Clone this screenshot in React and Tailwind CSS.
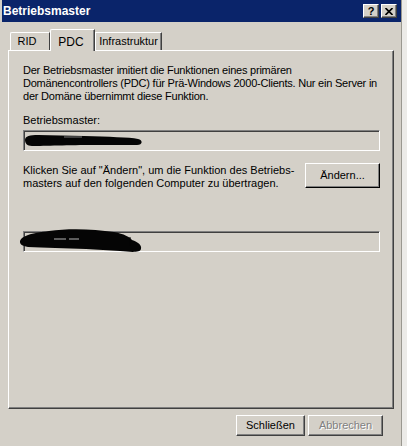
import React from "react";

const font = { fontFamily: '"Liberation Sans", Arial, sans-serif' };

function TitleBtn({ children }) {
  return (
    <div className="w-[16px] h-[14px] bg-[#d4d0c8] border-t border-l border-t-white border-l-white border-b border-r border-b-[#404040] border-r-[#404040] shadow-[inset_-1px_-1px_0_#808080] flex items-center justify-center">
      {children}
    </div>
  );
}

function Raised({ className = "", children }) {
  return (
    <div
      className={
        "bg-[#d4d0c8] border-t border-l border-t-white border-l-white border-b border-r border-b-[#404040] border-r-[#404040] shadow-[inset_-1px_-1px_0_#808080] flex items-center justify-center " +
        className
      }
    >
      {children}
    </div>
  );
}

function Sunken({ children }) {
  return (
    <div className="relative w-[357px] h-[21px] border-t border-l border-t-[#808080] border-l-[#808080] border-b border-r border-b-white border-r-white shadow-[inset_1px_1px_0_#404040]">
      {children}
    </div>
  );
}

export default function App() {
  return (
    <div className="w-[407px] h-[446px] bg-[#d4d0c8] flex text-black overflow-hidden" style={font}>
      <div className="w-[402px] h-full flex flex-col pl-[2px] border-r border-r-[#9a9890]">
        {/* Title bar */}
        <div className="h-[22px] bg-[#0a246a] flex items-center justify-between pl-[1px] pr-[4px]">
          <span className="text-white font-bold text-[12px] leading-none">Betriebsmaster</span>
          <div className="flex gap-[2px]">
            <TitleBtn>
              <span className="text-[11px] font-bold leading-none text-black">?</span>
            </TitleBtn>
            <TitleBtn>
              <svg width="8" height="7" viewBox="0 0 8 7">
                <path d="M0.5 0 L7.5 7 M7.5 0 L0.5 7" stroke="#000" strokeWidth="1.6" />
              </svg>
            </TitleBtn>
          </div>
        </div>

        {/* Tabs */}
        <div className="mt-[7px] h-[21px] flex items-end pl-[8px] text-[11px]">
          <div className="w-[40px] h-[18px] border-t border-l border-t-white border-l-white border-r border-r-[#404040] rounded-tl-[2px] flex items-center justify-center pr-[6px]">
            RID
          </div>
          <div className="relative z-10 w-[45px] h-[22px] -mb-[1px] bg-[#d4d0c8] border-t border-l border-t-white border-l-white border-r border-r-[#404040] shadow-[inset_-1px_0_0_#808080] rounded-tl-[2px] flex items-start justify-center pt-[3px] text-[12px] pr-[3px]">
            PDC
          </div>
          <div className="w-[67px] h-[18px] border-t border-l border-t-white border-l-[#ffffff] border-r border-r-[#404040] shadow-[inset_-1px_0_0_#808080] flex items-center justify-center">
            Infrastruktur
          </div>
        </div>

        {/* Panel */}
        <div className="ml-[6px] w-[386px] h-[359px] border-t border-l border-t-white border-l-white border-b border-r border-b-[#404040] border-r-[#404040] shadow-[inset_-1px_-1px_0_#808080] pl-[14px] pt-[13px] text-[11px] leading-[13px]">
          <p className="tracking-[-0.22px]">
            Der Betriebsmaster imitiert die Funktionen eines primären
            <br />
            Domänencontrollers (PDC) für Prä-Windows 2000-Clients. Nur ein Server in
            <br />
            der Domäne übernimmt diese Funktion.
          </p>
          <div className="mt-[11px]">Betriebsmaster:</div>
          <div className="mt-[3px]">
            <Sunken>
              <svg className="absolute left-0 top-0 overflow-visible" width="130" height="20">
                <path
                  d="M1,9 C1,5 6,4 14,4 L60,5 C85,6 105,6 114,8 C119,9 119,14 113,14 L70,14 C45,14 20,15 8,15 C3,15 1,12 1,9 Z"
                  fill="#050505"
                />
                <path d="M40,6 L58,6" stroke="#7a7a7a" strokeWidth="1" />
              </svg>
            </Sunken>
          </div>

          <div className="mt-[12px] w-[357px] flex justify-between items-start">
            <div className="pt-[1px]">
              Klicken Sie auf "Ändern", um die Funktion des Betriebs-
              <br />
              masters auf den folgenden Computer zu übertragen.
            </div>
            <Raised className="w-[75px] h-[25px] border-b-black border-r-black">
              <span className="text-[11px]">Ändern...</span>
            </Raised>
          </div>

          <div className="mt-[41px]">
            <Sunken>
              <svg className="absolute left-0 top-0 overflow-visible" width="130" height="22">
                <path
                  d="M-4,10 C-4,4 8,1 25,-1 C45,-4 70,-3 90,0 C100,2 106,5 108,8 C114,10 118,13 117,17 C116,21 106,20 96,19 L62,17 C42,16 20,16 4,15 C-2,14 -4,12 -4,10 Z"
                  fill="#050505"
                />
                <path d="M30,7 L42,7 M45,7 L55,7" stroke="#b5b5b5" strokeWidth="1" />
                <path d="M106,5 L106,14" stroke="#050505" strokeWidth="1" />
              </svg>
            </Sunken>
          </div>
        </div>

        {/* Bottom buttons */}
        <div className="mt-[6px] flex justify-end gap-[3px] pr-[18px] text-[11px]">
          <Raised className="w-[69px] h-[21px]">
            <span>Schließen</span>
          </Raised>
          <Raised className="w-[75px] h-[21px]">
            <span className="text-[#808080] [text-shadow:1px_1px_0_#ffffff]">Abbrechen</span>
          </Raised>
        </div>
      </div>
      <div className="flex-1 bg-[#ecebe8]" />
    </div>
  );
}
